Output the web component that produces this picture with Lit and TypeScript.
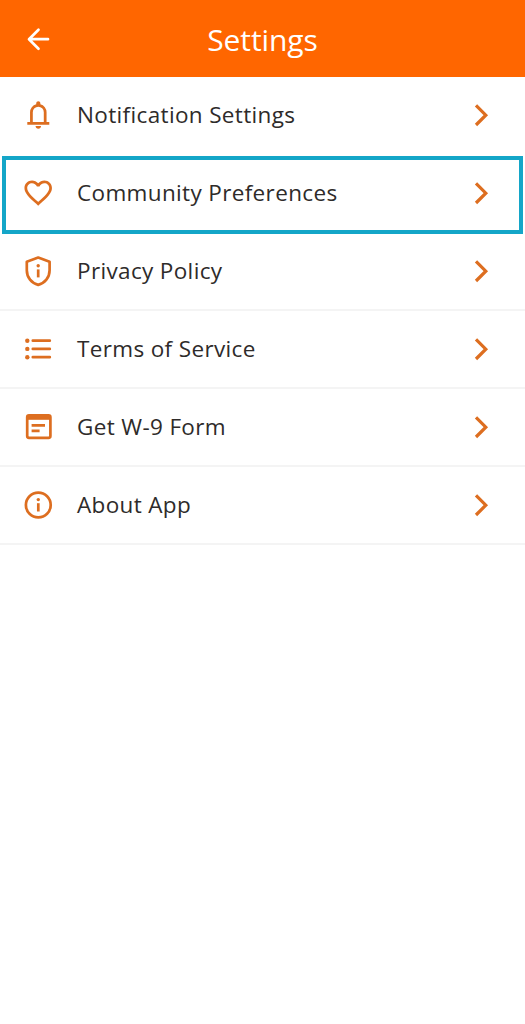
import { LitElement, html, css, svg } from 'lit';
import { customElement, property } from 'lit/decorators.js';

const icons = {
  bell: svg`<path transform="translate(.8 .5) scale(1.375)" fill="currentColor" d="M4 19v-2h2v-7q0-2.075 1.25-3.687T10.5 4.2v-.7q0-.625.438-1.062T12 2t1.063.438T13.5 3.5v.7q2 .5 3.25 2.113T18 10v7h2v2zm8 3q-.825 0-1.412-.587T10 20h4q0 .825-.587 1.413T12 22m-4-5h8v-7q0-1.65-1.175-2.825T12 6T9.175 7.175T8 10z"/>`,
  heart: svg`<path transform="translate(.7 .3) scale(1.375)" fill="currentColor" d="M16.5 3c-1.74 0-3.41.81-4.5 2.09C10.91 3.81 9.24 3 7.5 3 4.42 3 2 5.42 2 8.5c0 3.78 3.4 6.86 8.55 11.54L12 21.35l1.45-1.32C18.6 15.36 22 12.28 22 8.5 22 5.42 19.58 3 16.5 3zm-4.4 15.55l-.1.1-.1-.1C7.14 14.24 4 11.39 4 8.5 4 6.5 5.5 5 7.5 5c1.54 0 3.04.99 3.57 2.36h1.87C13.46 5.99 14.96 5 16.5 5c2 0 3.5 1.5 3.5 3.5 0 2.89-3.14 5.74-7.9 10.05z"/>`,
  shield: svg`<path d="M17.2 3.6 28.6 7.8V16.2C28.6 23.5 23.8 29.2 17.2 30.9 10.6 29.2 5.8 23.5 5.8 16.2V7.8Z" stroke-linejoin="round"/><circle cx="17.2" cy="11.8" r="1.7" fill="currentColor" stroke="none"/><path d="M17.2 15.4V23.4"/>`,
  list: svg`<g fill="currentColor" stroke="none"><circle cx="6.3" cy="8.7" r="2.2"/><circle cx="6.3" cy="16.9" r="2.2"/><circle cx="6.3" cy="25.2" r="2.2"/></g><path d="M11.8 8.7H28.8M11.8 16.9H28.8M11.8 25.2H28.8" stroke-linecap="round"/>`,
  form: svg`<rect x="6.2" y="5.4" width="23.2" height="22.5" rx="1.8"/><path d="M6 5.5H29.6V9.8H6Z" fill="currentColor" stroke="none"/><path d="M10.6 15.4H24M10.6 20.8H18.6"/>`,
  info: svg`<circle cx="17.3" cy="17" r="12.4"/><circle cx="17.3" cy="11.6" r="1.7" fill="currentColor" stroke="none"/><path d="M17.3 15.2V23.5"/>`,
};

@customElement('settings-row')
export class SettingsRow extends LitElement {
  @property() label = '';
  @property() icon: keyof typeof icons = 'bell';

  static styles = css`
    :host {
      display: flex;
      align-items: center;
      box-sizing: border-box;
      height: 78px;
      padding: 0 34px 1px 21px;
      border-bottom: 2px solid #f4f4f4;
      color: #dd6e20;
    }
    :host([plain]) { border-bottom-color: transparent; }
    svg { flex: none; fill: none; stroke: currentColor; stroke-width: 2.7; }
    .icon path[fill='currentColor'] { stroke: none; }
    .chevron { stroke-width: 3.2; }
    .label {
      flex: 1;
      padding-left: 22px;
      color: #2e2b2a;
      font-size: 22.5px;
      line-height: 30px;
      letter-spacing: 0.35px;
      white-space: nowrap;
    }
  `;

  render() {
    return html`
      <svg class="icon" width="34" height="34" viewBox="0 0 34 34">${icons[this.icon]}</svg>
      <span class="label">${this.label}</span>
      <svg class="chevron" width="20" height="26" viewBox="0 0 20 26">
        <path d="M5 3.4 14.8 13.2 5 23" />
      </svg>
    `;
  }
}

@customElement('app-root')
export class AppRoot extends LitElement {
  static styles = css`
    :host {
      display: block;
      min-height: 100vh;
      background: #fff;
      font-family: 'Open Sans', 'Noto Sans', sans-serif;
    }
    header {
      display: grid;
      grid-template-columns: 77px 1fr 77px;
      align-items: center;
      height: 77px;
      background: #ff6600;
      color: #fff;
    }
    .back {
      margin-left: 25px;
      fill: none;
      stroke: #fff;
      stroke-width: 2.7;
      stroke-linecap: round;
      stroke-linejoin: round;
    }
    h1 {
      margin: 3px 0 0;
      text-align: center;
      font-size: 30px;
      line-height: 42px;
      font-weight: 400;
      letter-spacing: -0.1px;
    }
    .highlight { position: relative; }
    .highlight::after {
      content: '';
      position: absolute;
      inset: 1px 2px -1px 1.5px;
      border: 4px solid #14a6c8;
    }
  `;

  render() {
    return html`
      <header>
        <svg class="back" width="28" height="28" viewBox="0 0 28 28">
          <path d="M23 14.2H4.5M13.5 4.7 4 14.2 13.5 23.7" />
        </svg>
        <h1>Settings</h1>
      </header>
      <main>
        <settings-row plain icon="bell" label="Notification Settings"></settings-row>
        <div class="highlight">
          <settings-row plain icon="heart" label="Community Preferences"></settings-row>
        </div>
        <settings-row icon="shield" label="Privacy Policy"></settings-row>
        <settings-row icon="list" label="Terms of Service"></settings-row>
        <settings-row icon="form" label="Get W-9 Form"></settings-row>
        <settings-row icon="info" label="About App"></settings-row>
      </main>
    `;
  }
}
